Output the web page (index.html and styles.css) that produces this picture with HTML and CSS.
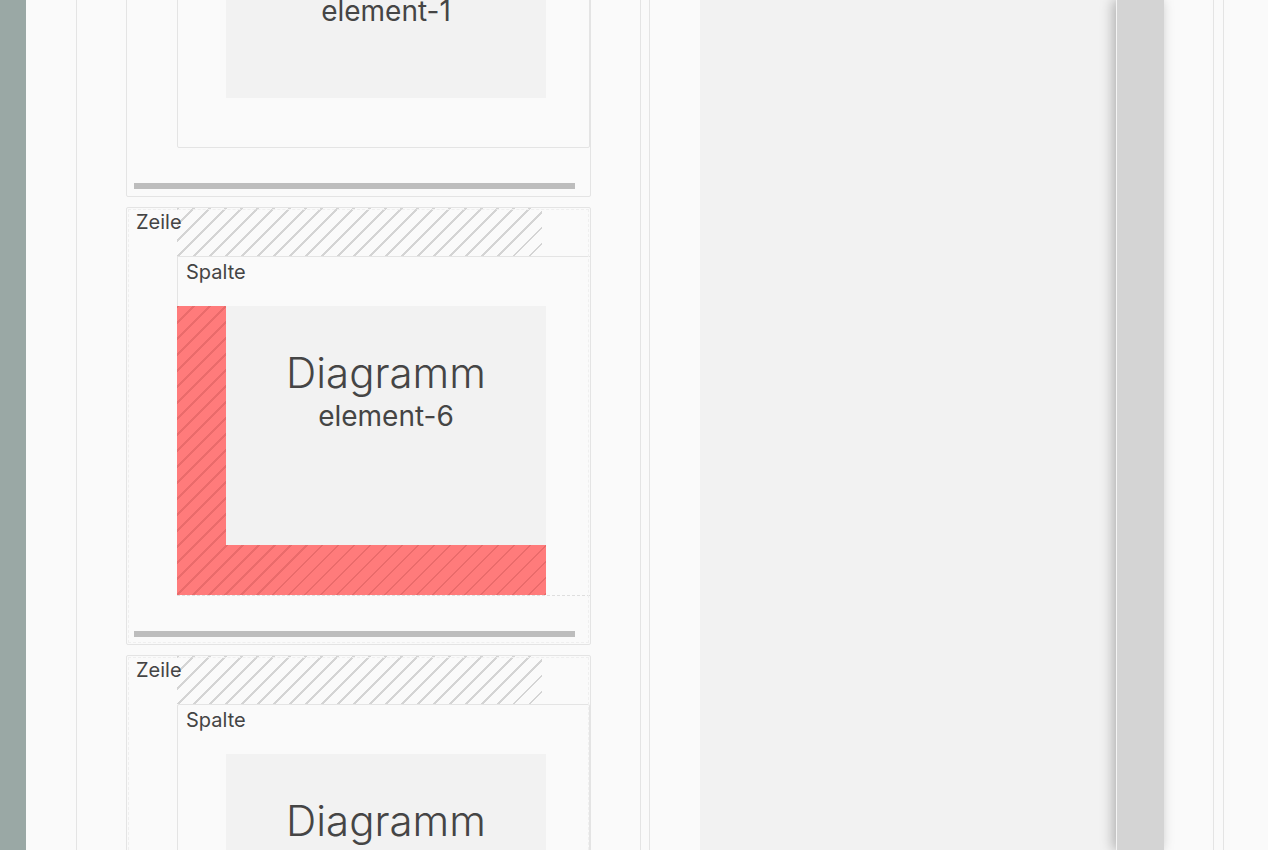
FILE: index.html
```html
<!DOCTYPE html>
<html lang="de">
<head>
<meta charset="utf-8">
<title>Layout-Editor</title>
<link rel="stylesheet" href="styles.css">
</head>
<body>
<div class="app">
  <div class="rail"></div>
  <div class="pane-a"></div>
  <div class="pane-b">
    <div class="stack">
      <section class="row">
        <div class="row-head"><span class="row-label">Zeile</span><div class="hatch"></div></div>
        <div class="col">
          <div class="col-label">Spalte</div>
          <div class="chart chart-1">
            <div class="chart-title">Diagramm</div>
            <div class="chart-id">element-1</div>
          </div>
        </div>
        <div class="scrollbar"></div>
      </section>

      <section class="row row-marked">
        <div class="row-head"><span class="row-label">Zeile</span><div class="hatch"></div></div>
        <div class="col col-active">
          <div class="col-label">Spalte</div>
          <div class="margin-zone">
            <div class="chart chart-6">
              <div class="chart-title">Diagramm</div>
              <div class="chart-id">element-6</div>
            </div>
          </div>
        </div>
        <div class="scrollbar"></div>
      </section>

      <section class="row row-marked">
        <div class="row-head"><span class="row-label">Zeile</span><div class="hatch"></div></div>
        <div class="col">
          <div class="col-label">Spalte</div>
          <div class="chart chart-7">
            <div class="chart-title">Diagramm</div>
            <div class="chart-id">element-7</div>
          </div>
        </div>
        <div class="scrollbar"></div>
      </section>
    </div>
  </div>
  <div class="gap"></div>
  <div class="pane-d"></div>
  <div class="canvas"></div>
  <div class="dark"></div>
  <div class="pane-e"></div>
  <div class="gap gap-2"></div>
  <div class="pane-f"></div>
</div>
</body>
</html>
```

FILE: styles.css
```css
* { box-sizing: content-box; }
html, body {
  margin: 0;
  padding: 0;
  height: 850px;
  overflow: hidden;
  background: #fafafa;
  font-family: Inter, "Noto Sans", sans-serif;
  color: #444444;
}
.app {
  display: flex;
  height: 850px;
  overflow: hidden;
}
.rail {
  width: 26px;
  flex: none;
  background: #9aa8a5;
}
.pane-a {
  width: 50px;
  flex: none;
  background: #fafafa;
  border-right: 1px solid #e4e4e4;
}
.pane-b {
  width: 465px;
  flex: none;
  padding: 0 49px;
  background: #fafafa;
  border-right: 1px solid #e4e4e4;
}
.gap {
  width: 8px;
  flex: none;
  background: #fafafa;
  border-right: 1px solid #e4e4e4;
}
.gap-2 { width: 9px; }
.pane-d {
  width: 50px;
  flex: none;
  background: #fafafa;
}
.canvas {
  width: 416px;
  flex: none;
  background: #f2f2f2;
}
.dark {
  width: 47px;
  flex: none;
  background: #d4d4d4;
  border-left: 1px solid #f4f4f4;
  box-shadow: -3px 0 12px rgba(0, 0, 0, 0.28);
  position: relative;
}
.pane-e {
  width: 49px;
  flex: none;
  background: #fafafa;
  border-right: 1px solid #e4e4e4;
}
.pane-f {
  flex: 1;
  background: #fafafa;
}

.stack {
  display: flex;
  flex-direction: column;
  gap: 10px;
  margin-top: -198px;
}
.row {
  position: relative;
  border: 1px solid #e4e4e4;
  border-radius: 2px;
  background: #fafafa;
}
.row-marked {
  outline: 1px dashed #efefef;
  outline-offset: -3px;
}
.row-head {
  display: flex;
  height: 48px;
}
.row-label {
  position: relative;
  z-index: 1;
  width: 41px;
  padding: 2px 0 0 9px;
  font-size: 20px;
  line-height: 24px;
  white-space: nowrap;
}
.hatch {
  width: 365px;
  height: 48px;
  background: repeating-linear-gradient(135deg, #d4d4d4 0 1.5px, rgba(250,250,250,0) 1.5px 11.31px);
}
.col {
  margin-left: 50px;
  border: 1px solid #e4e4e4;
  border-radius: 2px;
  padding: 0 0 49px 48px;
  background: #fafafa;
}
.col-active {
  border-right: none;
  border-bottom: 1px dashed #dedede;
  padding-bottom: 0;
  border-radius: 0;
}
.col-label {
  height: 46px;
  padding: 3px 0 0 8px;
  margin-left: -48px;
  font-size: 20px;
  line-height: 24px;
}
.margin-zone {
  margin-left: -49px;
  padding: 0 0 50px 49px;
  width: 320px;
  background-color: #ff7b7b;
  background-image: repeating-linear-gradient(135deg, #ea6b6b 0 1.5px, rgba(255,123,123,0) 1.5px 11.31px);
}
.chart {
  width: 320px;
  background: #f2f2f2;
  padding-top: 43px;
  box-sizing: border-box;
  text-align: center;
}
.chart-1 { height: 197px; }
.chart-6 { height: 239px; }
.chart-7 { height: 239px; }
.chart-title {
  font-size: 42px;
  line-height: 48px;
  font-weight: 300;
  color: #454545;
}
.chart-id {
  font-size: 28px;
  line-height: 37px;
  margin-top: 1px;
  font-weight: 400;
  color: #454545;
}
.scrollbar {
  width: 441px;
  height: 6px;
  margin: 35px 0 7px 7px;
  background: #bdbdbd;
}
```
